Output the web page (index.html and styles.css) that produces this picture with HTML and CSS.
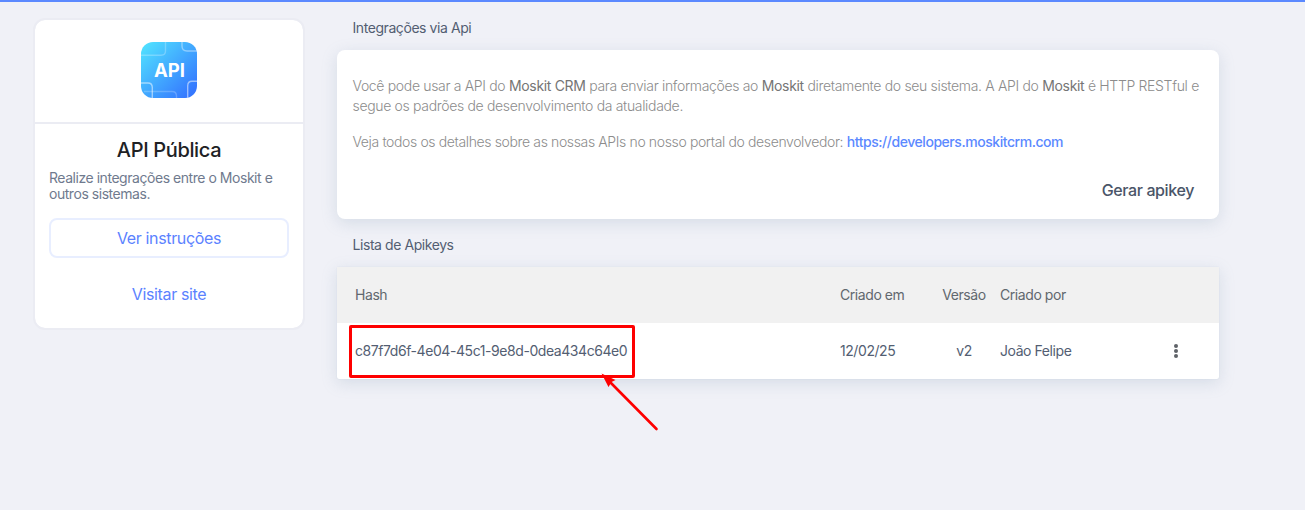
FILE: index.html
```html
<!DOCTYPE html>
<html lang="pt-BR">
<head>
    <meta charset="UTF-8">
    <meta name="viewport" content="width=device-width, initial-scale=1.0">
    <title>API Pública</title>
    <link rel="stylesheet" href="styles.css">
</head>
<body>

    <div class="page">
        <aside class="app-card">
            <div class="app-logo">
                <svg width="56" height="56" viewBox="0 0 56 56">
                    <defs>
                        <linearGradient id="logoBg" x1="0" y1="0" x2="1" y2="1">
                            <stop offset="0.05" stop-color="#50e0ff"/>
                            <stop offset="0.9" stop-color="#3578ff"/>
                        </linearGradient>
                        <clipPath id="logoClip">
                            <rect width="56" height="56" rx="12"/>
                        </clipPath>
                    </defs>
                    <g clip-path="url(#logoClip)" fill="none" stroke="#fff" stroke-width="1.4">
                        <rect width="56" height="56" fill="url(#logoBg)" stroke="none"/>
                        <path d="M0 13.2H20Q24.5 13.2 24.5 9V0" stroke-opacity="0.25"/>
                        <path d="M41 0V4Q41 9 46 9H56" stroke-opacity="0.4"/>
                        <path d="M0 41H7Q11.3 41 11.3 45.5V56" stroke-opacity="0.5"/>
                        <path d="M3 49.5H31Q35.5 49.5 35.5 54V56" stroke-opacity="0.22"/>
                        <path d="M56 39.3H51Q46.700 39.3 46.700 44V56" stroke-opacity="0.5"/>
                    </g>
                    <text class="logo-text" x="28.4" y="34.8" text-anchor="middle">API</text>
                </svg>
            </div>
            <div class="app-info">
                <h1>API Pública</h1>
                <p>Realize integrações entre o Moskit e outros sistemas.</p>
                <a class="btn btn-outline">Ver instruções</a>
                <a class="btn">Visitar site</a>
            </div>
        </aside>

        <main class="content">
            <h2>Integrações via Api</h2>
            <section class="panel">
                <p class="intro">Você pode usar a API do <b>Moskit CRM</b> para enviar informações ao <b>Moskit</b> diretamente do seu sistema. A API do <b>Moskit</b> é HTTP RESTful e segue os padrões de desenvolvimento da atualidade.</p>
                <p>Veja todos os detalhes sobre as nossas APIs no nosso portal do desenvolvedor: <a class="link">https://developers.moskitcrm.com</a></p>
                <div class="panel-actions">
                    <button>Gerar apikey</button>
                </div>
            </section>

            <h2>Lista de Apikeys</h2>
            <section class="table">
                <div class="row head">
                    <span>Hash</span>
                    <span>Criado em</span>
                    <span class="center">Versão</span>
                    <span>Criado por</span>
                </div>
                <div class="row">
                    <span class="hash">c87f7d6f-4e04-45c1-9e8d-0dea434c64e0
                        <span class="highlight"></span>
                        <svg class="arrow" width="60" height="62" viewBox="0 0 60 62">
                            <path d="M8 8L55.5 56" stroke="#fe0000" stroke-width="2.6" stroke-linecap="round"/>
                            <path d="M0.5 0.5L14.5 7L10.5 9L7.5 14Z" fill="#fe0000"/>
                        </svg>
                    </span>
                    <span>12/02/25</span>
                    <span class="center">v2</span>
                    <span>João Felipe</span>
                    <svg class="menu" width="6" height="16" viewBox="0 0 6 16" fill="#5f6368">
                        <circle cx="3" cy="3" r="2"/>
                        <circle cx="3" cy="8" r="2"/>
                        <circle cx="3" cy="13" r="2"/>
                    </svg>
                </div>
            </section>
        </main>
    </div>

</body>
</html>
```

FILE: styles.css
```css
* {
    box-sizing: border-box;
}

body {
    margin: 0;
    height: 100vh;
    overflow: hidden;
    border-top: 2px solid #5b89ff;
    background-color: #f0f1f7;
    color: #535e72;
    font-family: Inter, sans-serif;
    font-size: 14px;
    letter-spacing: -0.43px;
}

h1, h2, p {
    margin: 0;
}

.page {
    display: flex;
    align-items: flex-start;
    gap: 32px;
    padding: 16px 86px 0 33px;
}

.app-card {
    width: 272px;
    height: 312px;
    flex: none;
    background: #fff;
    background-clip: padding-box;
    border: 2px solid #ebecf3;
    border-radius: 12px;
}

.app-logo {
    height: 104px;
    padding-top: 22px;
    text-align: center;
    border-bottom: 2px solid #ebecf3;
}

.logo-text {
    fill: #fff;
    font-size: 18.5px;
    font-weight: 700;
    letter-spacing: 0;
}

.app-info {
    display: flex;
    flex-direction: column;
    padding: 14px 14px 0;
}

h1 {
    color: #202124;
    font-size: 20px;
    font-weight: 500;
    letter-spacing: -0.35px;
    line-height: 24px;
    text-align: center;
}

.app-info p {
    margin: 8px 0 16px;
    color: #6f7a8e;
    letter-spacing: -0.46px;
    line-height: 16px;
}

.btn {
    height: 40px;
    margin-bottom: 16px;
    color: #5b82ff;
    font-size: 16px;
    letter-spacing: -0.36px;
    line-height: 40px;
    text-align: center;
}

.btn-outline {
    border: 2px solid #e8eeff;
    border-radius: 8px;
    line-height: 36px;
}

.content {
    flex: 1;
}

h2 {
    height: 32px;
    padding-left: 15.5px;
    font-size: 14px;
    font-weight: 400;
    line-height: 20px;
}

.panel {
    height: 169px;
    margin-bottom: 16px;
    padding: 26px 15px 0 15.5px;
    background: #fff;
    border-radius: 8px;
    box-shadow: 0 4px 16px rgba(120, 145, 175, 0.22);
    color: #8c8c8c;
    font-weight: 300;
    letter-spacing: -0.37px;
    line-height: 20px;
}

.panel p {
    margin-bottom: 16px;
}

.panel .intro {
    letter-spacing: -0.33px;
}

.panel b {
    color: #757575;
    font-weight: 400;
}

.link {
    color: #5b89ff;
    font-weight: 500;
    letter-spacing: -0.45px;
}

.panel-actions {
    display: flex;
    justify-content: flex-end;
    padding: 12px 10px 0 0;
}

.panel-actions button {
    padding: 0;
    border: 0;
    background: none;
    color: #4a5568;
    font: 500 16px/20px Inter, sans-serif;
    letter-spacing: -0.38px;
}

.table {
    background: #fff;
    border-radius: 2px;
    box-shadow: 0 4px 16px rgba(120, 145, 175, 0.22), 0 0 1px rgba(120, 145, 190, 0.3);
}

.row {
    display: grid;
    grid-template-columns: 485px 96px 56px 8px 170px 1fr;
    align-items: center;
    height: 56px;
    padding: 0 16px 0 18px;
    line-height: 18px;
}

.row > :nth-child(4) {
    grid-column: 5;
}

.head {
    background: #f1f1f1;
    color: #61686e;
}

.center {
    text-align: center;
}

.hash {
    position: relative;
}

/* red marker around the key */
.highlight {
    position: absolute;
    top: -17px;
    left: -6px;
    width: 286px;
    height: 53px;
    border: 3px solid #fe0000;
    border-radius: 2px;
}

.arrow {
    position: absolute;
    top: 31px;
    left: 246px;
}

.menu {
    margin-left: 3px;
}
```
